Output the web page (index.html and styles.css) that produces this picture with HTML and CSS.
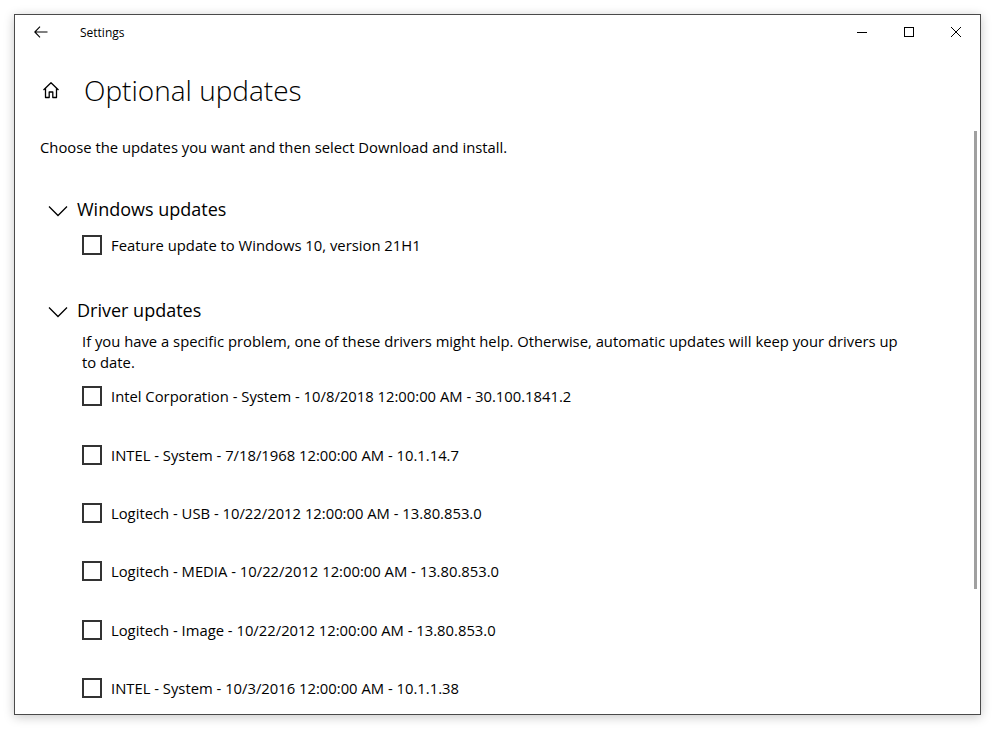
FILE: index.html
```html
<!DOCTYPE html>
<html>
<head>
<meta charset="utf-8">
<link rel="stylesheet" href="styles.css">
</head>
<body>
<div class="window">
  <div class="titlebar">
    <svg class="back" width="14" height="12" viewBox="0 0 14 12"><path d="M6 0.7 L0.8 6 L6 11.3 M0.8 6 H13.5" fill="none" stroke="#000" stroke-width="1.1"/></svg>
    <span class="apptitle">Settings</span>
    <div class="controls">
      <svg class="ctl" width="12" height="12" viewBox="0 0 12 12"><path d="M1 6.5 H11" stroke="#000" stroke-width="1"/></svg>
      <svg class="ctl" width="12" height="12" viewBox="0 0 12 12"><rect x="1.5" y="1.5" width="9" height="9" fill="none" stroke="#000" stroke-width="1"/></svg>
      <svg class="ctl" width="12" height="12" viewBox="0 0 12 12"><path d="M1 1 L11 11 M11 1 L1 11" stroke="#000" stroke-width="1"/></svg>
    </div>
  </div>
  <div class="content">
    <div class="pagehead">
      <svg class="home" width="18" height="18" viewBox="0 0 18 18"><path d="M1.5 9 L9 1.8 L16.5 9 M3.5 7.3 V16.5 H7.2 V11 H10.8 V16.5 H14.5 V7.3" fill="none" stroke="#000" stroke-width="1.3" stroke-linejoin="round"/></svg>
      <h1>Optional updates</h1>
    </div>
    <p class="intro">Choose the updates you want and then select Download and install.</p>

    <div class="group">
      <div class="ghead">
        <svg class="chev" width="20" height="12" viewBox="0 0 20 12"><path d="M1 1.5 L10 10.5 L19 1.5" fill="none" stroke="#000" stroke-width="1.3"/></svg>
        <h2>Windows updates</h2>
      </div>
      <div class="items">
        <label class="item first"><span class="box"></span><span>Feature update to Windows 10, version 21H1</span></label>
      </div>
    </div>

    <div class="group drivers">
      <div class="ghead">
        <svg class="chev" width="20" height="12" viewBox="0 0 20 12"><path d="M1 1.5 L10 10.5 L19 1.5" fill="none" stroke="#000" stroke-width="1.3"/></svg>
        <h2>Driver updates</h2>
      </div>
      <div class="items">
        <p class="note">If you have a specific problem, one of these drivers might help. Otherwise, automatic updates will keep your drivers up to date.</p>
        <label class="item"><span class="box"></span><span>Intel Corporation - System - 10/8/2018 12:00:00 AM - 30.100.1841.2</span></label>
        <label class="item"><span class="box"></span><span>INTEL - System - 7/18/1968 12:00:00 AM - 10.1.14.7</span></label>
        <label class="item"><span class="box"></span><span>Logitech - USB - 10/22/2012 12:00:00 AM - 13.80.853.0</span></label>
        <label class="item"><span class="box"></span><span>Logitech - MEDIA - 10/22/2012 12:00:00 AM - 13.80.853.0</span></label>
        <label class="item"><span class="box"></span><span>Logitech - Image - 10/22/2012 12:00:00 AM - 13.80.853.0</span></label>
        <label class="item"><span class="box"></span><span>INTEL - System - 10/3/2016 12:00:00 AM - 10.1.1.38</span></label>
      </div>
    </div>
  </div>
  <div class="scrollbar"></div>
</div>
</body>
</html>
```
FILE: styles.css
```css
* { box-sizing: border-box; }
html, body { margin: 0; padding: 0; background: #fff; }
body {
  font-family: "Open Sans", "Noto Sans", sans-serif;
  color: #000;
  width: 996px;
  height: 729px;
  overflow: hidden;
}
.window {
  position: relative;
  margin: 14px 0 0 14px;
  width: 967px;
  height: 701px;
  border: 1px solid #4a4a4a;
  background: #fff;
  box-shadow: 0 2px 10px rgba(0,0,0,0.22);
  overflow: hidden;
}
.titlebar {
  height: 34px;
  display: flex;
  align-items: center;
  padding-left: 19px;
}
.back { display: block; }
.apptitle {
  margin-left: 32px;
  font-size: 12px;
  line-height: 16px;
  margin-top: 2px;
}
.controls {
  margin-left: auto;
  display: flex;
  align-items: center;
  gap: 35px;
  padding-right: 18px;
}
.ctl { display: block; }
.content { padding-left: 25px; }
.pagehead {
  display: flex;
  align-items: center;
  height: 44px;
  margin-top: 19px;
}
.home { display: block; margin-left: 2px; }
h1 {
  margin: 0 0 0 24px;
  font-weight: 300;
  font-size: 28px;
  line-height: 36px;
}
.intro {
  margin: 25px 0 0 0;
  font-size: 14.8px;
  line-height: 20px;
}
.group { margin-top: 38px; }
.drivers { margin-top: 29px; }
.ghead {
  display: flex;
  align-items: center;
  height: 28px;
}
.chev { display: block; margin-left: 8px; margin-top: 4px; }
h2 {
  margin: 0 0 0 9px;
  font-weight: 400;
  font-size: 18px;
  line-height: 28px;
}
.items { padding-left: 42px; }
.note {
  margin: 7px 0 0 0;
  width: 830px;
  font-size: 14.8px;
  line-height: 21px;
}
.item {
  display: flex;
  align-items: center;
  height: 58.4px;
  font-size: 14.8px;
}
.item.first { height: 44px; }
.box {
  width: 20px;
  height: 20px;
  border: 2px solid #333;
  margin-right: 9px;
  flex: none;
}
.drivers .items .item:first-of-type { margin-top: -6px; }
.scrollbar {
  position: absolute;
  right: 3px;
  top: 116px;
  width: 3px;
  height: 458px;
  background: #a0a0a0;
}
```
